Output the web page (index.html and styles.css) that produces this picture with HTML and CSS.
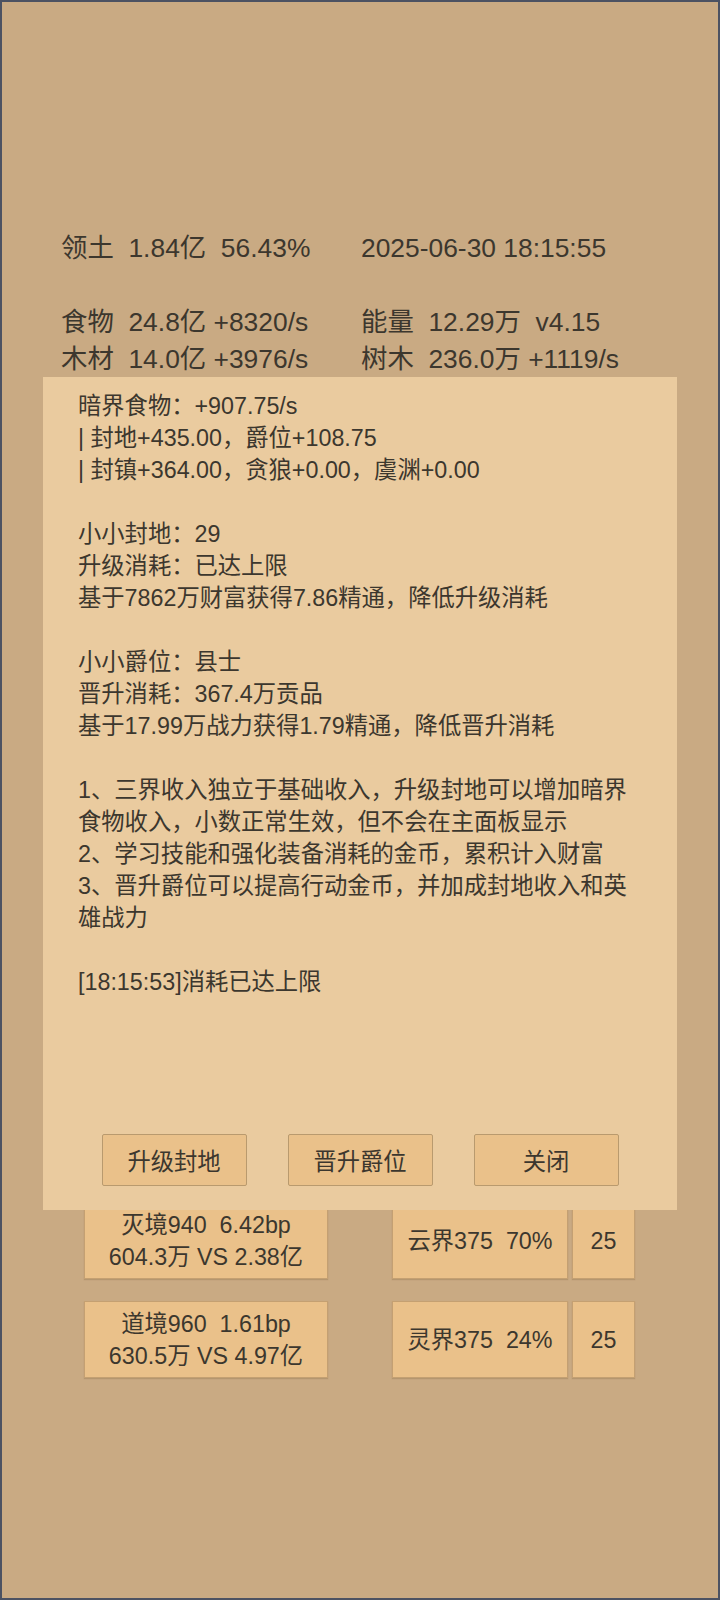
FILE: index.html
```html
<!DOCTYPE html>
<html lang="zh-CN">
<head>
<meta charset="utf-8">
<title>封地</title>
<link rel="stylesheet" href="styles.css">
</head>
<body>
<div class="screen">
  <section class="stats">
    <div class="stat-row">
      <div class="stat-cell">领土  1.84亿  56.43%</div>
      <div class="stat-cell">2025-06-30 18:15:55</div>
    </div>
    <div class="stat-row blank"></div>
    <div class="stat-row">
      <div class="stat-cell">食物  24.8亿 +8320/s</div>
      <div class="stat-cell">能量  12.29万  v4.15</div>
    </div>
    <div class="stat-row">
      <div class="stat-cell">木材  14.0亿 +3976/s</div>
      <div class="stat-cell">树木  236.0万 +1119/s</div>
    </div>
  </section>

  <section class="cards">
    <div class="card-row">
      <div class="card card-realm"><div>灭境940  6.42bp</div><div>604.3万 VS 2.38亿</div></div>
      <div class="card card-world">云界375  70%</div>
      <div class="card card-num">25</div>
    </div>
    <div class="card-row">
      <div class="card card-realm"><div>道境960  1.61bp</div><div>630.5万 VS 4.97亿</div></div>
      <div class="card card-world">灵界375  24%</div>
      <div class="card card-num">25</div>
    </div>
  </section>

  <div class="dialog">
    <div class="dialog-text">
      <div class="group">
        <div>暗界食物：+907.75/s</div>
        <div>| 封地+435.00，爵位+108.75</div>
        <div>| 封镇+364.00，贪狼+0.00，虞渊+0.00</div>
      </div>
      <div class="group">
        <div>小小封地：29</div>
        <div>升级消耗：已达上限</div>
        <div>基于7862万财富获得7.86精通，降低升级消耗</div>
      </div>
      <div class="group">
        <div>小小爵位：县士</div>
        <div>晋升消耗：367.4万贡品</div>
        <div>基于17.99万战力获得1.79精通，降低晋升消耗</div>
      </div>
      <div class="group">
        <div>1、三界收入独立于基础收入，升级封地可以增加暗界食物收入，小数正常生效，但不会在主面板显示</div>
        <div>2、学习技能和强化装备消耗的金币，累积计入财富</div>
        <div>3、晋升爵位可以提高行动金币，并加成封地收入和英雄战力</div>
      </div>
      <div class="group">
        <div>[18:15:53]消耗已达上限</div>
      </div>
    </div>
    <div class="dialog-actions">
      <button class="btn" type="button">升级封地</button>
      <button class="btn" type="button">晋升爵位</button>
      <button class="btn" type="button">关闭</button>
    </div>
  </div>
</div>
</body>
</html>
```

FILE: styles.css
```css
html, body {
  margin: 0;
  padding: 0;
}

body {
  width: 720px;
  height: 1600px;
  font-family: "Liberation Sans", "Noto Sans CJK SC", sans-serif;
  color: #3c372e;
}

.screen {
  position: relative;
  box-sizing: border-box;
  width: 720px;
  height: 1600px;
  border: 2px solid #4c5262;
  background: #c9aa83;
  overflow: hidden;
}

.stats {
  padding: 228px 0 0 59px;
  font-size: 26.4px;
  line-height: 37px;
}

.stat-row {
  display: flex;
  height: 37px;
}

.stat-cell {
  width: 300px;
  white-space: pre;
}

.cards {
  margin-top: 824px;
  padding-left: 82px;
  display: flex;
  flex-direction: column;
  gap: 22px;
  font-size: 23.3px;
  line-height: 32px;
}

.card-row {
  display: flex;
}

.card {
  box-sizing: border-box;
  height: 77px;
  background: #eac18a;
  border: 1px solid #c4a072;
  box-shadow: 0 1px 1px rgba(120, 90, 50, 0.25);
  display: flex;
  flex-direction: column;
  align-items: center;
  justify-content: center;
  white-space: pre;
  text-align: center;
}

.card-realm {
  width: 244px;
  margin-right: 64px;
}

.card-world {
  width: 176px;
  margin-right: 4px;
}

.card-num {
  width: 63px;
}

.dialog {
  position: absolute;
  left: 41px;
  top: 375px;
  box-sizing: border-box;
  width: 634px;
  height: 833px;
  padding: 13px 35px 24px;
  background: #eacb9f;
  display: flex;
  flex-direction: column;
}

.dialog-text {
  flex: 1;
  font-size: 23.3px;
  line-height: 32px;
}

.group + .group {
  margin-top: 32px;
}

.dialog-actions {
  display: flex;
  justify-content: center;
  gap: 41px;
}

.btn {
  box-sizing: border-box;
  width: 145px;
  height: 52px;
  margin: 0;
  padding: 0;
  background: #eac18a;
  border: 1px solid #b99a6e;
  border-radius: 2px;
  font-family: "Liberation Sans", "Noto Sans CJK SC", sans-serif;
  font-size: 23.3px;
  color: #3c372e;
}
```
